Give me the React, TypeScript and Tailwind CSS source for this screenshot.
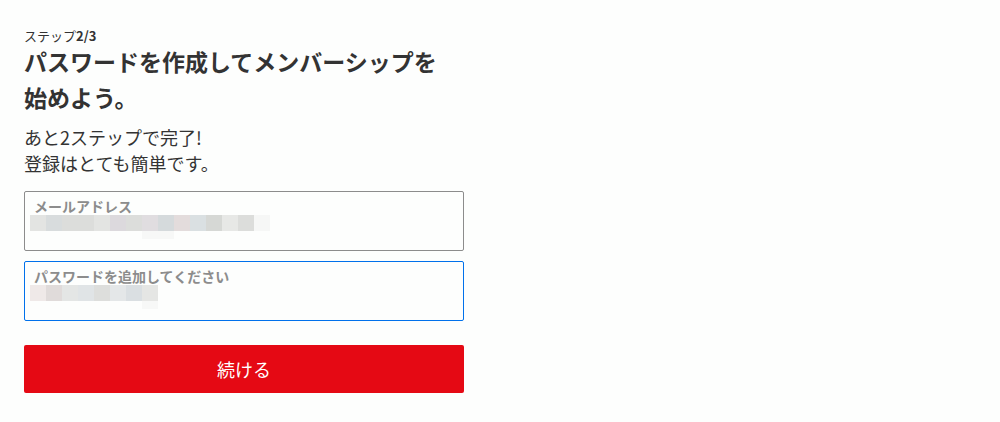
const emailBlocks = [
  "#e3e4e2", "#d8dcdd", "#dcdddb", "#dcdddb", "#e3e4e2", "#dcd9dd", "#dcdddb", "#e0dde0",
  "#d5dadc", "#e3dcdc", "#dae0e2", "#d6d8d5", "#e7e8e6", "#dcdddb", "#f6f7f6",
];
const passBlocks = ["#efe9e8", "#e0dbda", "#e4e6e5", "#e0e4e6", "#dddedc", "#e4e7e8", "#dadfe2", "#e5e6e4"];

function Mosaic({ blocks, tail }: { blocks: string[]; tail: number }) {
  return (
    <div className="ml-[5px]">
      <div className="flex">
        {blocks.map((c, i) => (
          <div key={i} className="w-4 h-4" style={{ backgroundColor: c }} />
        ))}
      </div>
      <div className="flex ml-[112px]">
        {Array.from({ length: tail }).map((_, i) => (
          <div key={i} className="w-4 h-2 bg-[#f7f8f7]" />
        ))}
      </div>
    </div>
  );
}

function Field({ label, blocks, tail, focused }: { label: string; blocks: string[]; tail: number; focused?: boolean }) {
  return (
    <div
      className={`h-[60px] rounded-[2px] border pt-[5px] ${
        focused ? "border-[#0071eb]" : "border-[#8c8c8c]"
      }`}
    >
      <div className="pl-[9px] text-[14px] leading-[18px] font-bold text-[#8c8c8c]">{label}</div>
      <Mosaic blocks={blocks} tail={tail} />
    </div>
  );
}

export default function App() {
  return (
    <div
      className="min-h-[422px] w-[1000px] bg-[#fdfefd] text-[#333] pl-6 pt-[28px]"
      style={{ fontFamily: '"Noto Sans CJK JP", "Liberation Sans", sans-serif' }}
    >
      <div className="w-[440px]">
        <div className="text-[13px] leading-[15px]">
          ステップ<span className="font-bold">2/3</span>
        </div>
        <h1 className="text-[23px] leading-[36px] font-bold pr-[20px]">
          パスワードを作成してメンバーシップを始めよう。
        </h1>
        <div className="text-[18px] leading-[26px] mt-[9px]">
          <div>あと2ステップで完了!</div>
          <div>登録はとても簡単です。</div>
        </div>
        <div className="mt-[15px] flex flex-col gap-[10px]">
          <Field label="メールアドレス" blocks={emailBlocks} tail={2} />
          <Field label="パスワードを追加してください" blocks={passBlocks} tail={1} focused />
        </div>
        <button className="mt-6 w-full h-12 rounded-[2px] bg-[#e50914] text-white text-[18px]">
          続ける
        </button>
      </div>
    </div>
  );
}
